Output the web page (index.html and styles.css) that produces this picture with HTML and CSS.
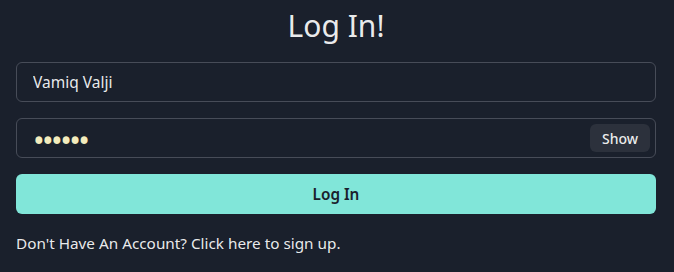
FILE: index.html
```html
<!DOCTYPE html>
<html lang="en">
<head>
<meta charset="utf-8">
<title>Log In</title>
<link rel="stylesheet" href="styles.css">
</head>
<body>
<main class="login">
  <h1 class="title">Log In!</h1>
  <div class="field">
    <input class="input" type="text" value="Vamiq Valji">
  </div>
  <div class="field">
    <input class="input input-pass" type="password" value="secret">
    <div class="right-el"><button class="show-btn" type="button">Show</button></div>
  </div>
  <button class="submit" type="button">Log In</button>
  <p class="signup">Don't Have An Account? Click here to sign up.</p>
</main>
</body>
</html>
```

FILE: styles.css
```css
html, body {
  margin: 0;
  padding: 0;
  background: #1a202c;
  color: rgba(255, 255, 255, 0.92);
  font-family: "Noto Sans", "Open Sans", sans-serif;
}

.login {
  display: flex;
  flex-direction: column;
  gap: 16px;
  padding: 0 18px 0 16px;
}

.title {
  margin: 0;
  font-size: 30px;
  font-weight: 400;
  line-height: 46px;
  padding-top: 3px;
  height: 46px;
  box-sizing: border-box;
  text-align: center;
}

.field {
  position: relative;
  display: flex;
}

.input {
  flex: 1;
  box-sizing: border-box;
  height: 40px;
  padding: 0 16px;
  border: 1px solid #474c58;
  border-radius: 6px;
  background: transparent;
  color: rgba(255, 255, 255, 0.92);
  font: inherit;
  font-size: 15.5px;
  outline: none;
}

.input-pass {
  color: #f3ecbd;
  padding: 4px 72px 0 16px;
  font-size: 31px;
  letter-spacing: -2.6px;
}

.right-el {
  position: absolute;
  top: 0;
  right: 0;
  width: 72px;
  height: 40px;
  display: flex;
  align-items: center;
  justify-content: center;
}

.show-btn {
  height: 28px;
  padding: 0 12px;
  border: 0;
  border-radius: 6px;
  background: #2c313c;
  color: rgba(255, 255, 255, 0.92);
  font: inherit;
  font-size: 14px;
  font-weight: 500;
}

.submit {
  height: 40px;
  border: 0;
  border-radius: 6px;
  background: #81e6d9;
  color: #1a202c;
  font: inherit;
  font-size: 15.3px;
  font-weight: 600;
}

.signup {
  margin: 0;
  font-size: 15.3px;
  line-height: 24px;
  padding-top: 1px;
}
```
